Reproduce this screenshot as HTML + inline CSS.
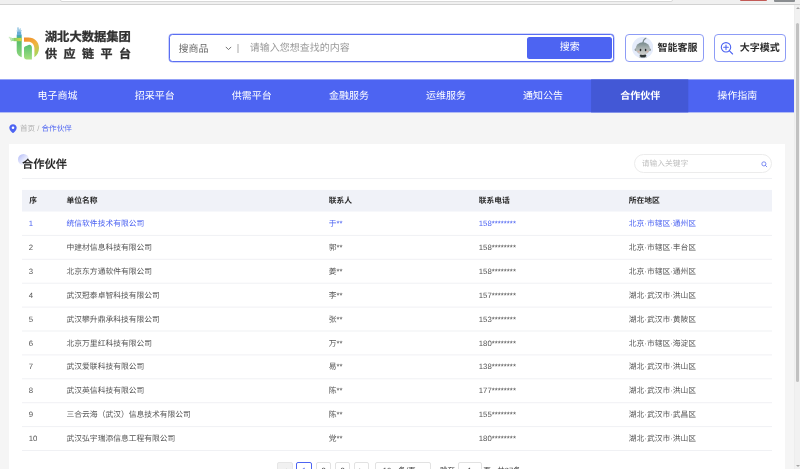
<!DOCTYPE html>
<html lang="zh-CN">
<head>
<meta charset="utf-8">
<title>合作伙伴 - 湖北大数据集团供应链平台</title>
<style>
*{box-sizing:border-box;margin:0;padding:0}
html,body{width:800px;height:469px;overflow:hidden;background:#f5f5f5}
body{position:relative;text-rendering:geometricPrecision;font-family:"Liberation Sans","Noto Sans CJK SC",sans-serif;color:#333;-webkit-font-smoothing:antialiased}
.abs{position:absolute}
/* browser chrome strip */
#chrome{left:0;top:0;width:800px;height:5px;background:#f0f0f0;border-bottom:1px solid #d2d2d2;box-shadow:0 .6px 0 #ececec}
#chrome .addr{left:60px;top:-3px;width:613px;height:4.5px;background:#fff;border:1px solid #d8d8d8;border-radius:2px}
#chrome .red{left:739.5px;top:-2px;width:27px;height:3.2px;background:#c25a56;border-radius:1px}
#chrome .gry{left:773.5px;top:-2px;width:21.5px;height:3.5px;background:#8a8d90;border-radius:1px}
/* scrollbar */
#sbar{left:794.4px;top:5px;width:5.6px;height:464px;background:#f1f1f1;box-shadow:inset .6px 0 0 #ececec}
#sbar .thumb{left:1.4px;top:17.8px;width:3.6px;height:359.2px;background:#c1c1c1;border-radius:1.8px}
#sbar .up{left:1.2px;top:1.7px;width:0;height:0;border-left:2px solid transparent;border-right:2px solid transparent;border-bottom:2.3px solid #a6a6a6}
#sbar .dn{left:1.2px;top:460px;width:0;height:0;border-left:2px solid transparent;border-right:2px solid transparent;border-top:2.3px solid #a6a6a6}
/* header */
#header{left:0;top:5px;width:794.4px;height:74.6px;background:#fff}
.logo-t1{left:44.8px;top:29.3px;font-size:12.3px;font-weight:700;line-height:16px;color:#303030;white-space:nowrap;-webkit-text-stroke:.3px #303030}
.logo-t2{left:45px;top:45.6px;font-size:12px;font-weight:700;line-height:16px;color:#303030;white-space:nowrap;letter-spacing:6.5px;-webkit-text-stroke:.3px #303030}
#search{left:169.4px;top:33.8px;width:444.6px;height:28px;border:1px solid #5a6ef2;border-radius:3.5px;background:#fff;box-shadow:0 0 0 .3px rgba(90,110,242,.7),0 0 0 1px rgba(90,110,242,.1)}
#search .sel{left:8px;top:1px;line-height:28px;font-size:10px;color:#6a6a6a}
#search .sep{left:67px;top:9.2px;width:1.2px;height:9.4px;background:#d4d4d4}
#search .ph{left:79.4px;top:0;line-height:28px;font-size:10px;color:#9a9a9a}
#search .btn{left:357px;top:2.4px;width:84.5px;height:21.6px;background:#4d64f2;border-radius:2.5px;color:#fff;font-size:10px;line-height:21.6px;text-align:center}
.hbtn{top:33.8px;height:28px;border:1px solid #8d9cf6;border-radius:4px;background:#fff;font-size:10px;font-weight:700;color:#2b2b2b;line-height:27px;white-space:nowrap}
/* nav */
#nav{left:0;top:79px;width:794.4px;height:34px;overflow:hidden}
#nav .it{top:0;width:97.1px;height:34px;padding-left:.5px;line-height:36.4px;text-align:center;color:#fff;font-size:10px}
#nav .it.on{font-weight:700}
/* breadcrumb */
#bc{left:20px;top:122.1px;font-size:7.6px;line-height:14px;color:#b0b0b0;white-space:nowrap}
#bc b{font-weight:400;color:#4d64f2}
/* card */
#card{left:8.8px;top:144.2px;width:776.7px;height:340px;background:#fff}
.title{left:13.3px;top:12.4px;font-size:11.2px;font-weight:500;line-height:16px;color:#222;white-space:nowrap;-webkit-text-stroke:.2px #222}
.dot{left:9.2px;top:9.8px;width:11.4px;height:11.4px;border-radius:50%;background:linear-gradient(135deg,#bcc3f8 12%,rgba(225,229,253,.6) 60%,rgba(255,255,255,0) 88%)}
.kw{left:625.4px;top:9.8px;width:138.2px;height:19.4px;border:1px solid #ececec;border-radius:9.5px;background:#fff}
.kw span{left:6.6px;top:0;line-height:17.8px;font-size:7.75px;color:#c0c0c0;white-space:nowrap}
.hr{left:13.2px;top:34.2px;width:750px;height:1px;background:#ececec}
#tbl{left:13.2px;top:45.8px;width:750px}
.row{left:0;width:750px;height:23.9px;font-size:7.78px;color:#555;line-height:23.9px}
.row span{position:absolute;top:0;white-space:nowrap}
.row .c1{left:6.8px}.row.hd .c1{left:7.2px}.row .c2{left:44.6px}.row .c3{left:306.8px}.row .c4{left:456.8px}.row .c5{left:606.8px}
.row.hd{height:21.5px;font-weight:700;color:#2a2a2a;line-height:21.4px}
.row.act{color:#4d64f2}
/* pagination */
.pg{top:317.4px;height:17.8px;border:1px solid #e2e2e2;border-radius:2px;background:#fff;font-size:7.6px;line-height:15.8px;text-align:center;color:#444}
.pgt{top:317.4px;font-size:7.6px;line-height:17.8px;color:#444;white-space:nowrap}
</style>
</head>
<body>
<div id="root" class="abs" style="left:0;top:0;width:800px;height:469px;overflow:hidden;will-change:transform">
<div id="chrome" class="abs"><div class="abs addr"></div><div class="abs red"></div><div class="abs gry"></div></div>

<div id="header" class="abs"></div>
<svg class="abs" style="left:8px;top:26px" width="34" height="36" viewBox="0 0 34 36">
  <defs>
    <linearGradient id="g1" x1="0" y1="0" x2="0" y2="1"><stop offset="0" stop-color="#4f9fd0"/><stop offset=".12" stop-color="#46b28f"/><stop offset=".28" stop-color="#58bd6c"/><stop offset="1" stop-color="#8ed67c"/></linearGradient>
    <linearGradient id="g2" x1="0" y1="0" x2="1" y2="0"><stop offset="0" stop-color="#7ccf6a"/><stop offset="1" stop-color="#d9d743"/></linearGradient>
    <linearGradient id="g3" x1="0" y1="0" x2="0.6" y2="1"><stop offset="0" stop-color="#f08a2c"/><stop offset=".55" stop-color="#f2b23c"/><stop offset="1" stop-color="#a9d65c"/></linearGradient>
    <linearGradient id="g4" x1="0" y1="0" x2="0" y2="1"><stop offset="0" stop-color="#55c070"/><stop offset="1" stop-color="#a6e07e"/></linearGradient>
  </defs>
  <path d="M8.7 8.6 H13.7 V31.2 C10.8 30.6 8.7 28 8.7 24.6 Z" fill="url(#g1)"/>
  <g fill="#4f9fd0"><rect x="9" y="5.6" width="4.2" height="3.2" opacity=".85"/><rect x="9.4" y="3.4" width="3.4" height="2.4" opacity=".6"/><rect x="9" y="1.4" width="2" height="2.2" opacity=".45"/><rect x="11.6" y="2" width="1.4" height="1.4" opacity=".3"/><rect x="8.4" y="4.4" width="1" height="1" opacity=".35"/><rect x="13" y="4" width="1" height="1.2" opacity=".35"/></g>
  <rect x="5.6" y="11.9" width="8.1" height="3.3" fill="url(#g2)"/>
  <g fill="#7ccf6a"><rect x="3.6" y="12" width="2.2" height="3" opacity=".7"/><rect x="2" y="11.4" width="1.6" height="2.6" opacity=".5"/><rect x="0.8" y="10.8" width="1.2" height="1.6" opacity=".4"/><rect x="2.6" y="14" width="1.4" height="1.4" opacity=".4"/></g>
  <path d="M16 11.6 H20.5 C26.6 11.6 31 16.2 31 22 C31 26 29.2 29.4 26.4 31.3 V22.4 C26.4 18.4 23.6 15.8 20.2 15.8 H16 Z" fill="url(#g3)"/>
  <path d="M16 22.2 C16 21.2 16.6 20.6 17.6 20.2 L20.6 18.9 C22.4 18.3 23.9 19.6 23.9 21.6 V33.5 H18.8 C17.1 33.5 16 32.4 16 30.8 Z" fill="url(#g4)"/>
</svg>
<div class="abs logo-t1">湖北大数据集团</div>
<div class="abs logo-t2">供应链平台</div>

<div id="search" class="abs">
  <div class="abs sel">搜商品</div>
  <svg class="abs" style="left:54.5px;top:11.7px" width="7" height="5" viewBox="0 0 7 5"><path d="M0.8 0.9 L3.5 3.6 L6.2 0.9" fill="none" stroke="#6a6a6a" stroke-width="0.95"/></svg>
  <div class="abs sep"></div>
  <div class="abs ph">请输入您想查找的内容</div>
  <div class="abs btn">搜索</div>
</div>

<div class="abs hbtn" style="left:625px;width:78.6px">
  <svg class="abs" style="left:5.8px;top:2.4px" width="21.4" height="21.4" viewBox="0 0 21.4 21.4">
    <defs><clipPath id="cc"><circle cx="10.7" cy="10.7" r="10.7"/></clipPath>
    <linearGradient id="hd" x1="0" y1="0" x2="0" y2="1"><stop offset="0" stop-color="#75888b"/><stop offset=".42" stop-color="#a4aeae"/><stop offset="1" stop-color="#d2d2cf"/></linearGradient></defs>
    <circle cx="10.7" cy="10.7" r="10.7" fill="#e5ecfb"/>
    <g clip-path="url(#cc)">
      <path d="M11 5.6 C11.2 3.4 12.2 1.8 14 0.9" fill="none" stroke="#7d8b8d" stroke-width="1.15" stroke-linecap="round"/>
      <ellipse cx="11" cy="18.7" rx="3.3" ry="1.9" fill="#2f3537"/>
      <circle cx="8" cy="20.3" r=".8" fill="#b9bdbc"/><circle cx="14.1" cy="20.3" r=".8" fill="#b9bdbc"/>
      <circle cx="3.9" cy="12.8" r="1.3" fill="#8f9a9b"/><circle cx="17.7" cy="12.8" r="1.3" fill="#8f9a9b"/>
      <ellipse cx="10.8" cy="11.6" rx="7.2" ry="6.3" fill="url(#hd)"/>
      <ellipse cx="8.5" cy="12.9" rx="0.8" ry="1.25" fill="#25262a"/>
      <ellipse cx="13.6" cy="12.9" rx="0.8" ry="1.25" fill="#25262a"/>
      <ellipse cx="6.6" cy="14.6" rx="1.2" ry=".8" fill="#dcaea3" opacity=".75"/>
      <ellipse cx="15.4" cy="14.6" rx="1.2" ry=".8" fill="#dcaea3" opacity=".75"/>
    </g>
  </svg>
  <span class="abs" style="left:31.6px;top:0">智能客服</span>
</div>
<div class="abs hbtn" style="left:714px;width:71.8px">
  <svg class="abs" style="left:5.4px;top:6.4px" width="15" height="15" viewBox="0 0 15 15"><circle cx="6" cy="6.3" r="4.7" fill="none" stroke="#4d64f2" stroke-width="1.1"/><path d="M3.7 6.3 H8.3 M6 4 V8.6 M9.5 9.9 L12.6 13" fill="none" stroke="#4d64f2" stroke-width="1.1" stroke-linecap="round"/></svg>
  <span class="abs" style="left:24.8px;top:0">大字模式</span>
</div>

<div id="nav" class="abs">
  <svg class="abs" style="left:0;top:0" width="794.4" height="34" viewBox="0 0 794.4 34"><rect x="0" y="0.4" width="794.4" height="33" fill="#4d64f2"/><rect x="591.1" y="0.4" width="97.2" height="33" fill="#4358d6"/></svg>
  <div class="abs it" style="left:8.8px">电子商城</div>
  <div class="abs it" style="left:105.9px">招采平台</div>
  <div class="abs it" style="left:203px">供需平台</div>
  <div class="abs it" style="left:300.1px">金融服务</div>
  <div class="abs it" style="left:397.2px">运维服务</div>
  <div class="abs it" style="left:494.3px">通知公告</div>
  <div class="abs it on" style="left:591.4px">合作伙伴</div>
  <div class="abs it" style="left:688.5px">操作指南</div>
</div>

<svg class="abs" style="left:8.7px;top:123.8px" width="8" height="9.4" viewBox="0 0 8 9.4"><path d="M4 0.2 C6.1 0.2 7.7 1.8 7.7 3.8 C7.7 6 5.6 7.9 4 9.2 C2.4 7.9 0.3 6 0.3 3.8 C0.3 1.8 1.9 0.2 4 0.2 Z" fill="#4d64f2"/><circle cx="4" cy="3.8" r="1.3" fill="#fff"/></svg>
<div id="bc" class="abs">首页 / <b>合作伙伴</b></div>

<div id="card" class="abs">
  <div class="abs dot"></div>
  <div class="abs title">合作伙伴</div>
  <div class="abs kw"><span class="abs">请输入关键字</span>
    <svg class="abs" style="left:126.2px;top:6.2px" width="6.6" height="6.6" viewBox="0 0 8 8"><circle cx="3.5" cy="3.5" r="2.5" fill="none" stroke="#5b6ff0" stroke-width=".95"/><path d="M5.4 5.4 L7 7" stroke="#5b6ff0" stroke-width=".95" stroke-linecap="round"/></svg>
  </div>
  <div id="tbl" class="abs">
    <svg class="abs" style="left:0;top:-12px" width="750" height="275" viewBox="0 -12 750 275"><rect x="0" y="-11.95" width="750" height="1" fill="#f0f1f4"/><rect x="0" y="-0.1" width="750" height="21.6" fill="#f0f2f8"/><rect x="0" y="44.90" width="750" height="1" fill="#f0f1f4"/><rect x="0" y="68.80" width="750" height="1" fill="#f0f1f4"/><rect x="0" y="92.70" width="750" height="1" fill="#f0f1f4"/><rect x="0" y="116.60" width="750" height="1" fill="#f0f1f4"/><rect x="0" y="140.50" width="750" height="1" fill="#f0f1f4"/><rect x="0" y="164.40" width="750" height="1" fill="#f0f1f4"/><rect x="0" y="188.30" width="750" height="1" fill="#f0f1f4"/><rect x="0" y="212.20" width="750" height="1" fill="#f0f1f4"/><rect x="0" y="236.10" width="750" height="1" fill="#f0f1f4"/><rect x="0" y="260.00" width="750" height="1" fill="#f0f1f4"/></svg>
    <div class="abs row hd" style="top:0"><span class="c1">序</span><span class="c2">单位名称</span><span class="c3">联系人</span><span class="c4">联系电话</span><span class="c5">所在地区</span></div>
    <div class="abs row act" style="top:22.10px"><span class="c1">1</span><span class="c2">统信软件技术有限公司</span><span class="c3">于**</span><span class="c4">158********</span><span class="c5">北京·市辖区·通州区</span></div>
    <div class="abs row" style="top:46.00px"><span class="c1">2</span><span class="c2">中建材信息科技有限公司</span><span class="c3">郭**</span><span class="c4">158********</span><span class="c5">北京·市辖区·丰台区</span></div>
    <div class="abs row" style="top:69.90px"><span class="c1">3</span><span class="c2">北京东方通软件有限公司</span><span class="c3">姜**</span><span class="c4">158********</span><span class="c5">北京·市辖区·通州区</span></div>
    <div class="abs row" style="top:93.80px"><span class="c1">4</span><span class="c2">武汉冠泰卓智科技有限公司</span><span class="c3">李**</span><span class="c4">157********</span><span class="c5">湖北·武汉市·洪山区</span></div>
    <div class="abs row" style="top:117.70px"><span class="c1">5</span><span class="c2">武汉攀升鼎承科技有限公司</span><span class="c3">张**</span><span class="c4">153********</span><span class="c5">湖北·武汉市·黄陂区</span></div>
    <div class="abs row" style="top:141.60px"><span class="c1">6</span><span class="c2">北京万里红科技有限公司</span><span class="c3">万**</span><span class="c4">180********</span><span class="c5">北京·市辖区·海淀区</span></div>
    <div class="abs row" style="top:165.50px"><span class="c1">7</span><span class="c2">武汉爱联科技有限公司</span><span class="c3">易**</span><span class="c4">138********</span><span class="c5">湖北·武汉市·洪山区</span></div>
    <div class="abs row" style="top:189.40px"><span class="c1">8</span><span class="c2">武汉英信科技有限公司</span><span class="c3">陈**</span><span class="c4">177********</span><span class="c5">湖北·武汉市·洪山区</span></div>
    <div class="abs row" style="top:213.30px"><span class="c1">9</span><span class="c2">三合云海（武汉）信息技术有限公司</span><span class="c3">陈**</span><span class="c4">155********</span><span class="c5">湖北·武汉市·武昌区</span></div>
    <div class="abs row" style="top:237.20px"><span class="c1">10</span><span class="c2">武汉弘宇瑞添信息工程有限公司</span><span class="c3">党**</span><span class="c4">180********</span><span class="c5">湖北·武汉市·洪山区</span></div>
  </div>
  <div class="abs pg" style="left:268.6px;width:15.2px;background:#f1f1f1;border-color:#e6e6e6;color:#c4c4c4">&lt;</div>
  <div class="abs pg" style="left:287.4px;width:15.8px;border-color:#4d64f2;color:#4d64f2">1</div>
  <div class="abs pg" style="left:307.2px;width:15.4px">2</div>
  <div class="abs pg" style="left:326px;width:15.4px">3</div>
  <div class="abs pg" style="left:344.8px;width:15.4px">&gt;</div>
  <div class="abs pg" style="left:366.6px;width:55.4px;text-align:left;padding-left:6.4px">10<span style="margin-left:7px">条/页</span></div>
  <div class="abs pgt" style="left:431.2px">跳至</div>
  <div class="abs pg" style="left:448.8px;width:24px">1</div>
  <div class="abs pgt" style="left:474.4px">页</div>
  <div class="abs pgt" style="left:488.4px">共97条</div>
</div>

<div id="sbar" class="abs"><div class="abs up"></div><div class="abs thumb"></div><div class="abs dn"></div></div>
</div>
</body>
</html>
